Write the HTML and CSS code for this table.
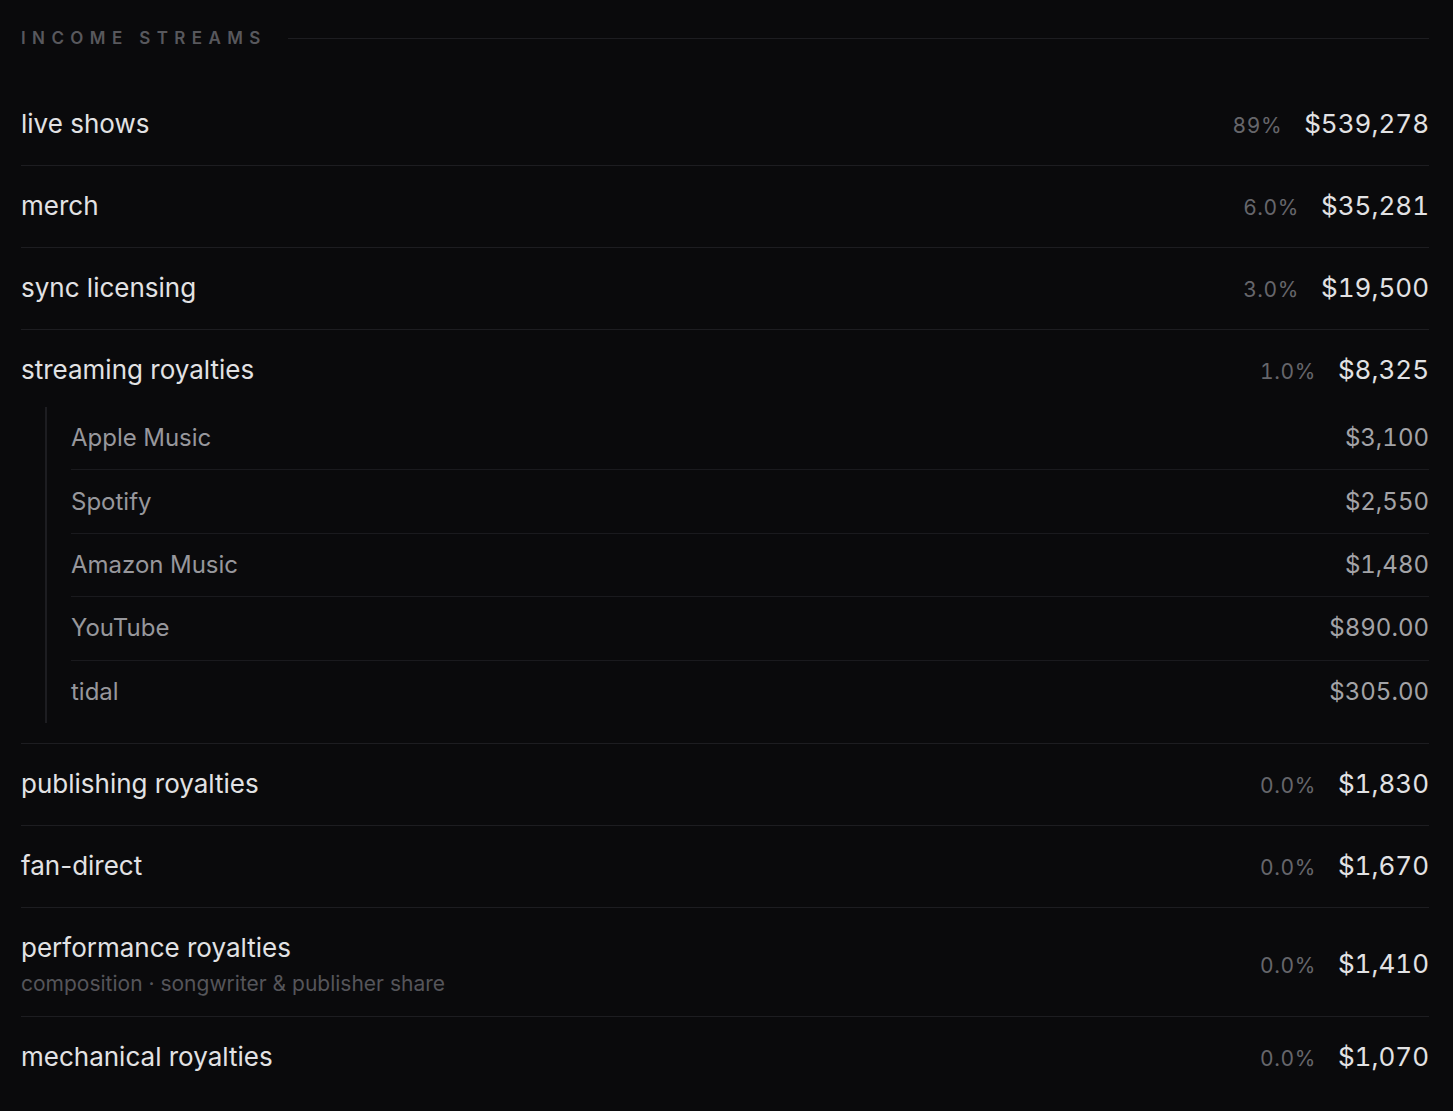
FILE: index.html
```html
<!DOCTYPE html>
<html>
<head>
<meta charset="utf-8">
<link rel="stylesheet" href="styles.css">
</head>
<body>
<main class="page">
  <header class="section-head">
    <h2 class="section-title">INCOME STREAMS</h2>
    <span class="section-rule"></span>
  </header>
  <ul class="streams">
    <li class="stream">
      <div class="stream-main">
        <div class="stream-label"><span class="stream-name">live shows</span></div>
        <div class="stream-figures"><span class="pct">89%</span><span class="amount">$539,278</span></div>
      </div>
    </li>
    <li class="stream">
      <div class="stream-main">
        <div class="stream-label"><span class="stream-name">merch</span></div>
        <div class="stream-figures"><span class="pct">6.0%</span><span class="amount">$35,281</span></div>
      </div>
    </li>
    <li class="stream">
      <div class="stream-main">
        <div class="stream-label"><span class="stream-name">sync licensing</span></div>
        <div class="stream-figures"><span class="pct">3.0%</span><span class="amount">$19,500</span></div>
      </div>
    </li>
    <li class="stream stream-expanded">
      <div class="stream-main">
        <div class="stream-label"><span class="stream-name">streaming royalties</span></div>
        <div class="stream-figures"><span class="pct">1.0%</span><span class="amount">$8,325</span></div>
      </div>
      <ul class="sub-list">
        <li class="sub-row"><span class="sub-name">Apple Music</span><span class="sub-amount">$3,100</span></li>
        <li class="sub-row"><span class="sub-name">Spotify</span><span class="sub-amount">$2,550</span></li>
        <li class="sub-row"><span class="sub-name">Amazon Music</span><span class="sub-amount">$1,480</span></li>
        <li class="sub-row"><span class="sub-name">YouTube</span><span class="sub-amount">$890.00</span></li>
        <li class="sub-row"><span class="sub-name">tidal</span><span class="sub-amount">$305.00</span></li>
      </ul>
    </li>
    <li class="stream">
      <div class="stream-main">
        <div class="stream-label"><span class="stream-name">publishing royalties</span></div>
        <div class="stream-figures"><span class="pct">0.0%</span><span class="amount">$1,830</span></div>
      </div>
    </li>
    <li class="stream">
      <div class="stream-main">
        <div class="stream-label"><span class="stream-name">fan-direct</span></div>
        <div class="stream-figures"><span class="pct">0.0%</span><span class="amount">$1,670</span></div>
      </div>
    </li>
    <li class="stream stream-with-note">
      <div class="stream-main">
        <div class="stream-label"><span class="stream-name">performance royalties</span><span class="stream-note">composition · songwriter &amp; publisher share</span></div>
        <div class="stream-figures"><span class="pct">0.0%</span><span class="amount">$1,410</span></div>
      </div>
    </li>
    <li class="stream">
      <div class="stream-main">
        <div class="stream-label"><span class="stream-name">mechanical royalties</span></div>
        <div class="stream-figures"><span class="pct">0.0%</span><span class="amount">$1,070</span></div>
      </div>
    </li>
  </ul>
</main>
</body>
</html>
```
FILE: styles.css
```css
* { box-sizing: border-box; }
html, body {
  margin: 0;
  padding: 0;
  background: #0a0a0c;
}
body {
  font-family: Inter, "Noto Sans", sans-serif;
  color: #e2e2e4;
}
.page {
  padding: 26px 24px 0 21px;
}
.section-head {
  display: flex;
  align-items: center;
  gap: 21px;
  height: 24px;
}
.section-title {
  margin: 0;
  font-size: 17px;
  font-weight: 600;
  letter-spacing: 6.4px;
  color: #58585d;
  line-height: 24px;
}
.section-rule {
  flex: 1;
  height: 1px;
  background: #1d1d21;
}
.streams {
  list-style: none;
  margin: 0;
  padding: 0;
  margin-top: 34px;
}
.stream {
  border-bottom: 1px solid #1d1d21;
  padding: 25px 0 26px;
}
.stream:last-child { border-bottom: none; }
.stream-main {
  display: flex;
  align-items: center;
  justify-content: space-between;
}
.stream-label {
  display: flex;
  flex-direction: column;
}
.stream-name {
  font-size: 26px;
  line-height: 30px;
  height: 30px;
  color: #e2e2e4;
}
.stream-note {
  font-size: 21px;
  line-height: 24px;
  margin-top: 9px;
  color: #55555a;
}
.stream-figures {
  display: flex;
  align-items: baseline;
  gap: 22px;
  height: 30px;
  line-height: 30px;
  font-variant-numeric: tabular-nums;
}
.pct {
  font-size: 21px;
  color: #66666b;
  letter-spacing: 0.6px;
}
.amount {
  font-size: 26px;
  color: #e2e2e4;
}
.stream-expanded { padding-bottom: 20px; }
.stream-with-note { padding-bottom: 20px; }
.sub-list {
  list-style: none;
  margin: 22px 0 0 24px;
  padding: 0 0 0 24px;
  border-left: 2px solid #1d1d21;
}
.sub-row {
  display: flex;
  justify-content: space-between;
  align-items: center;
  height: 63.4px;
  line-height: 30px;
  border-bottom: 1px solid #1a1a1e;
  font-variant-numeric: tabular-nums;
}
.sub-row:last-child { border-bottom: none; height: 62px; }
.sub-name {
  font-size: 24px;
  color: #97979c;
}
.sub-amount {
  font-size: 24px;
  color: #a3a3a7;
}
```
